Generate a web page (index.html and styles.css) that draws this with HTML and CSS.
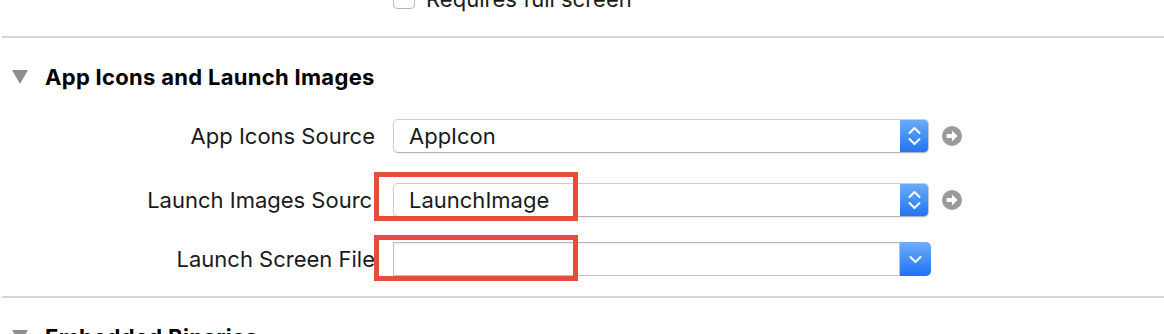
FILE: index.html
```html
<!DOCTYPE html>
<html>
<head>
<meta charset="utf-8">
<link rel="stylesheet" href="styles.css">
</head>
<body>
<div class="page">
  <div class="prev">
    <div class="check-row">
      <span class="checkbox"></span>
      <span class="check-label">Requires full screen</span>
    </div>
  </div>
  <div class="sep"></div>
  <section class="section">
    <div class="sec-head">
      <svg class="disclosure" width="16" height="14" viewBox="0 0 16 14"><polygon points="0,0 16,0 8,14" fill="#8e8e8e"/></svg>
      <h2 class="sec-title">App Icons and Launch Images</h2>
    </div>
    <div class="form">
      <div class="row r1">
        <div class="label">App Icons Source</div>
        <div class="popup">
          <span class="value">AppIcon</span>
          <span class="popup-btn">
            <svg width="29" height="34" viewBox="0 0 29 34"><polyline points="9.5,14 14.5,9 19.5,14" fill="none" stroke="#fff" stroke-width="2" stroke-linecap="round" stroke-linejoin="round"/><polyline points="9.5,20 14.5,25 19.5,20" fill="none" stroke="#fff" stroke-width="2" stroke-linecap="round" stroke-linejoin="round"/></svg>
          </span>
        </div>
        <span class="goto"><svg width="20" height="20" viewBox="0 0 20 20"><circle cx="10" cy="10" r="10" fill="#9b9b9b"/><polygon points="4.5,8 10,8 10,4.5 15.5,10 10,15.5 10,12 4.5,12" fill="#fff"/></svg></span>
      </div>
      <div class="row r2">
        <div class="label long"><span>Launch Images Source</span></div>
        <div class="popup">
          <span class="value">LaunchImage</span>
          <span class="popup-btn">
            <svg width="29" height="34" viewBox="0 0 29 34"><polyline points="9.5,14 14.5,9 19.5,14" fill="none" stroke="#fff" stroke-width="2" stroke-linecap="round" stroke-linejoin="round"/><polyline points="9.5,20 14.5,25 19.5,20" fill="none" stroke="#fff" stroke-width="2" stroke-linecap="round" stroke-linejoin="round"/></svg>
          </span>
        </div>
        <span class="goto"><svg width="20" height="20" viewBox="0 0 20 20"><circle cx="10" cy="10" r="10" fill="#9b9b9b"/><polygon points="4.5,8 10,8 10,4.5 15.5,10 10,15.5 10,12 4.5,12" fill="#fff"/></svg></span>
      </div>
      <div class="row r3">
        <div class="label">Launch Screen File</div>
        <div class="combo">
          <span class="combo-field"></span>
          <span class="combo-btn">
            <svg width="31" height="34" viewBox="0 0 31 34"><polyline points="10.5,15 15.5,20 20.5,15" fill="none" stroke="#fff" stroke-width="2" stroke-linecap="round" stroke-linejoin="round"/></svg>
          </span>
        </div>
      </div>
    </div>
  </section>
  <div class="sep"></div>
  <section class="section">
    <div class="sec-head">
      <svg class="disclosure" width="16" height="14" viewBox="0 0 16 14"><polygon points="0,0 16,0 8,14" fill="#8e8e8e"/></svg>
      <h2 class="sec-title">Embedded Binaries</h2>
    </div>
  </section>
  <div class="annot a1"></div>
  <div class="annot a2"></div>
</div>
</body>
</html>
```
FILE: styles.css
```css
html, body {
  margin: 0;
  padding: 0;
  background: #fff;
}
body {
  font-family: Inter, "Liberation Sans", Arial, sans-serif;
  color: #1a1a1a;
  overflow: hidden;
}
.page {
  position: relative;
  width: 1164px;
  height: 334px;
  overflow: hidden;
}
.prev {
  height: 36px;
  display: flow-root;
}
.check-row {
  display: flex;
  align-items: center;
  gap: 11px;
  margin-left: 393px;
  margin-top: -13px;
  height: 22px;
}
.checkbox {
  width: 20px;
  height: 20px;
  border: 1px solid #b8b8b8;
  border-radius: 4px;
  background: #fff;
  box-sizing: content-box;
}
.check-label {
  font-size: 22px;
  line-height: 22px;
  position: relative;
  top: 1px;
}
.sep {
  height: 2px;
  margin-left: 2px;
  background: #d6d6d6;
}
.section {
  padding-bottom: 20px;
  display: flow-root;
}
.sec-head {
  display: flex;
  align-items: center;
  margin-top: 27px;
  height: 24px;
}
.disclosure {
  margin-left: 12px;
  margin-right: 17px;
  flex: none;
}
.sec-title {
  margin: 0;
  font-size: 22px;
  letter-spacing: 0.3px;
  font-weight: 700;
  line-height: 24px;
  color: #000;
}
.form {
  margin-top: 30px;
}
.row {
  display: flex;
  align-items: center;
  height: 34px;
}
.r2 { margin-top: 30px; }
.r3 { margin-top: 25px; }
.label {
  width: 375px;
  flex: none;
  text-align: right;
  white-space: nowrap;
  overflow: hidden;
  font-size: 22px;
  line-height: 34px;
  color: #1a1a1a;
  margin-right: 18px;
}
.label.long {
  width: 372px;
  margin-right: 21px;
}
.label.long span {
  display: inline-block;
  margin-right: -13px;
}
.popup {
  width: 536px;
  height: 34px;
  box-sizing: border-box;
  border: 1px solid #cbcbcb;
  border-bottom-color: #b3b3b3;
  border-radius: 5px;
  background: #fff;
  display: flex;
  align-items: center;
  overflow: hidden;
  box-shadow: 0 1px 0 rgba(0,0,0,0.04);
}
.value {
  flex: 1;
  padding-left: 15px;
  font-size: 22px;
  line-height: 32px;
  color: #1a1a1a;
}
.popup-btn {
  width: 29px;
  height: 34px;
  margin: -1px -1px -1px 0;
  background: linear-gradient(#6eadfa, #1f72f5);
  border-radius: 0 5px 5px 0;
  display: flex;
}
.goto {
  margin-left: 13px;
  display: flex;
}
.combo {
  width: 538px;
  height: 34px;
  display: flex;
}
.combo-field {
  flex: 1;
  box-sizing: border-box;
  border: 1px solid #c2c2c2;
  border-top-color: #b8b8b8;
  background: #fff;
  box-shadow: inset 0 1px 0 #efefef;
}
.combo-btn {
  width: 31px;
  height: 34px;
  background: linear-gradient(#70aefb, #1f72f5);
  border-radius: 0 5px 5px 0;
  display: flex;
}
.annot {
  position: absolute;
  box-sizing: border-box;
  border: 5px solid #e84c3d;
}
.a1 {
  left: 374px;
  top: 172px;
  width: 204px;
  height: 49px;
}
.a2 {
  left: 374px;
  top: 235px;
  width: 204px;
  height: 46px;
}
```
